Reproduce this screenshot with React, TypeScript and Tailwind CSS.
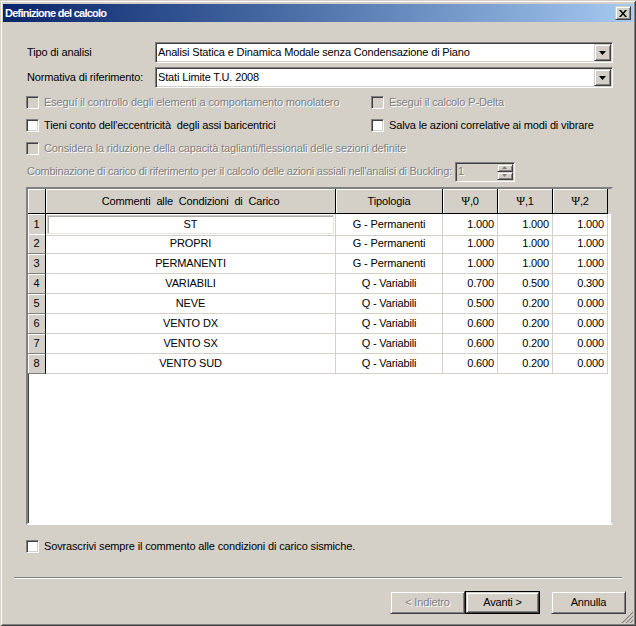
import React from 'react'

const SUNKEN =
  'border border-t-[#808080] border-l-[#808080] border-b-white border-r-white shadow-[inset_1px_1px_0_#404040,inset_-1px_-1px_0_#d4d0c8]'
const RAISED =
  'border border-t-[#d4d0c8] border-l-[#d4d0c8] border-b-[#404040] border-r-[#404040] shadow-[inset_1px_1px_0_#fff,inset_-1px_-1px_0_#808080]'
const DIS = 'text-[#808080] [text-shadow:1px_1px_0_#fff]'

const ROWS = [
  { n: 1, c: 'ST', t: 'G - Permanenti', p: ['1.000', '1.000', '1.000'] },
  { n: 2, c: 'PROPRI', t: 'G - Permanenti', p: ['1.000', '1.000', '1.000'] },
  { n: 3, c: 'PERMANENTI', t: 'G - Permanenti', p: ['1.000', '1.000', '1.000'] },
  { n: 4, c: 'VARIABILI', t: 'Q - Variabili', p: ['0.700', '0.500', '0.300'] },
  { n: 5, c: 'NEVE', t: 'Q - Variabili', p: ['0.500', '0.200', '0.000'] },
  { n: 6, c: 'VENTO DX', t: 'Q - Variabili', p: ['0.600', '0.200', '0.000'] },
  { n: 7, c: 'VENTO SX', t: 'Q - Variabili', p: ['0.600', '0.200', '0.000'] },
  { n: 8, c: 'VENTO SUD', t: 'Q - Variabili', p: ['0.600', '0.200', '0.000'] },
]

function Check({ label, disabled }: { label: string; disabled?: boolean }) {
  return (
    <div className="flex items-center whitespace-pre">
      <span className={`w-[13px] h-[13px] shrink-0 ${SUNKEN} ${disabled ? 'bg-[#d4d0c8]' : 'bg-white'}`} />
      <span className={`ml-[5px] ${disabled ? DIS : ''}`}>{label}</span>
    </div>
  )
}

function Combo({ value }: { value: string }) {
  return (
    <div className={`w-[458px] h-[21px] bg-white flex items-center ${SUNKEN}`}>
      <span className="flex-1 pl-[2px] truncate">{value}</span>
      <span className={`w-[17px] h-[17px] mr-[1px] bg-[#d4d0c8] flex items-center justify-center ${RAISED}`}>
        <svg width="7" height="4" viewBox="0 0 7 4">
          <path d="M0 0h7L3.5 4z" fill="#000" />
        </svg>
      </span>
    </div>
  )
}

function Button({ label, disabled, def }: { label: string; disabled?: boolean; def?: boolean }) {
  return (
    <div className={`w-[75px] h-[23px] ${def ? 'border border-black' : ''}`}>
      <div className={`w-full h-full flex items-center justify-center bg-[#d4d0c8] ${RAISED} ${disabled ? DIS : ''}`}>
        {label}
      </div>
    </div>
  )
}

export default function App() {
  return (
    <div className="w-[636px] h-[626px] bg-[#d4d0c8] relative overflow-hidden flex flex-col text-[11px] tracking-[-0.15px] text-black font-['Liberation_Sans',Arial,sans-serif] shadow-[inset_1px_1px_0_#d4d0c8,inset_-1px_-1px_0_#404040,inset_2px_2px_0_#fff,inset_-2px_-2px_0_#808080]">
      {/* title bar */}
      <div className="mt-[4px] mx-[3px] h-[18px] bg-gradient-to-r from-[#0a246a] to-[#a6caf0] flex items-center justify-between pl-[2px] pr-[2px]">
        <span className="text-white font-bold tracking-[-0.75px]">Definizione del calcolo</span>
        <span className={`w-[16px] h-[14px] bg-[#d4d0c8] flex items-center justify-center ${RAISED}`}>
          <svg width="8" height="7" viewBox="0 0 8 7">
            <path d="M0 0h2l2 2.5L6 0h2L5 3.5 8 7H6L4 4.5 2 7H0l3-3.5z" fill="#000" />
          </svg>
        </span>
      </div>

      <div className="mt-[20px] h-[21px] flex items-center pl-[27px]">
        <span className="w-[128px]">Tipo di analisi</span>
        <Combo value="Analisi Statica e Dinamica Modale senza Condensazione di Piano" />
      </div>
      <div className="mt-[4px] h-[21px] flex items-center pl-[27px]">
        <span className="w-[128px]">Normativa di riferimento:</span>
        <Combo value="Stati Limite T.U. 2008" />
      </div>

      <div className="mt-[3px] h-[23px] flex items-center pl-[26px]">
        <div className="w-[345px]">
          <Check label="Eseguí il controllo degli elementi a comportamento monolatero" disabled />
        </div>
        <Check label="Esegui il calcolo P-Delta" disabled />
      </div>
      <div className="h-[23px] flex items-center pl-[26px]">
        <div className="w-[345px]">
          <Check label="Tieni conto dell'eccentricità  degli assi baricentrici" />
        </div>
        <Check label="Salva le azioni correlative ai modi di vibrare" />
      </div>
      <div className="h-[23px] flex items-center pl-[26px]">
        <Check label="Considera la riduzione della capacità taglianti/flessionali delle sezioni definite" disabled />
      </div>
      <div className="h-[23px] flex items-center pl-[27px]">
        <span className={`${DIS} tracking-[-0.25px]`}>
          Combinazione di carico di riferimento per il calcolo delle azioni assiali nell'analisi di Buckling:
        </span>
        <div className={`ml-[3px] w-[60px] h-[20px] flex items-center bg-[#d4d0c8] ${SUNKEN}`}>
          <span className={`flex-1 pl-[2px] ${DIS}`}>1</span>
          <div className="w-[16px] h-full flex flex-col mr-[1px] py-[1px]">
            <span className={`flex-1 flex items-center justify-center ${RAISED}`}>
              <svg width="5" height="3" viewBox="0 0 5 3">
                <path d="M2.5 0L5 3H0z" fill="#808080" />
              </svg>
            </span>
            <span className={`flex-1 flex items-center justify-center ${RAISED}`}>
              <svg width="5" height="3" viewBox="0 0 5 3">
                <path d="M0 0h5L2.5 3z" fill="#808080" />
              </svg>
            </span>
          </div>
        </div>
      </div>

      {/* grid */}
      <div className="mt-[4px] ml-[26px] w-[587px] h-[338px] bg-white border-2 border-t-[#808080] border-l-[#808080] border-b-white border-r-[#d4d0c8] shadow-[inset_1px_1px_0_#404040]">
        <div className="grid grid-cols-[18px_290px_107px_55px_55px_55px] h-[25px] bg-[#d4d0c8]">
          {['', 'Commenti  alle  Condizioni  di  Carico', 'Tipologia', 'Ψ,0', 'Ψ,1', 'Ψ,2'].map((h, i) => (
            <div
              key={i}
              className="flex items-center justify-center whitespace-pre border-r border-b border-black shadow-[inset_1px_1px_0_#fff]"
            >
              {h.startsWith('Ψ') ? (
                <span>
                  <span className="font-['Liberation_Serif',serif] text-[12px]">Ψ</span>
                  {h.slice(1)}
                </span>
              ) : (
                h
              )}
            </div>
          ))}
        </div>
        {ROWS.map(r => (
          <div key={r.n} className="grid grid-cols-[18px_290px_107px_55px_55px_55px] h-[20px]">
            <div className="bg-[#d4d0c8] flex items-center justify-center border-r border-b border-r-black border-b-[#808080] shadow-[inset_1px_1px_0_#fff]">
              {r.n}
            </div>
            <div className="border-r border-b border-[#d4d0c8] flex items-center justify-center p-[1px]">
              {r.n === 1 ? (
                <div className="w-full h-full flex items-center justify-center border border-t-[#d4d0c8] border-l-[#d4d0c8] border-b-[#e8e6e1] border-r-[#e8e6e1] shadow-[inset_1px_1px_0_#b0ada6]">
                  {r.c}
                </div>
              ) : (
                r.c
              )}
            </div>
            <div className="border-r border-b border-[#d4d0c8] flex items-center justify-center">{r.t}</div>
            {r.p.map((v, i) => (
              <div key={i} className="border-r border-b border-[#d4d0c8] flex items-center justify-end pr-[3px]">
                {v}
              </div>
            ))}
          </div>
        ))}
      </div>

      <div className="mt-[13px] h-[16px] flex items-center pl-[26px]">
        <Check label="Sovrascrivi sempre il commento alle condizioni di carico sismiche." />
      </div>

      <div className="mt-[23px] mx-[14px] h-[2px] border-t border-t-[#808080] border-b border-b-white" />

      <div className="mt-[12px] h-[23px] flex justify-end pr-[10px]">
        <Button label="< Indietro" disabled />
        <Button label="Avanti >" def />
        <div className="w-[11px]" />
        <Button label="Annulla" />
      </div>

      {/* resize grip */}
      <svg className="absolute right-[3px] bottom-[3px]" width="12" height="12" viewBox="0 0 12 12">
        <path d="M11 1L1 11M11 5L5 11M11 9L9 11" stroke="#fff" strokeWidth="1" />
        <path d="M12 1L1 12M12 5L5 12M12 9L9 12" stroke="#808080" strokeWidth="1.2" />
      </svg>
    </div>
  )
}
